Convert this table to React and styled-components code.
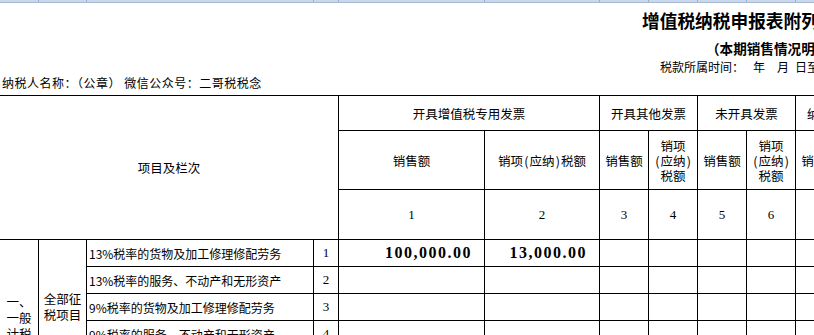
import styled, { createGlobalStyle } from "styled-components";

const GlobalStyle = createGlobalStyle`
  html, body {
    margin: 0;
    padding: 0;
    background: #ffffff;
    overflow: hidden;
  }
  body {
    width: 814px;
    height: 335px;
    font-family: "Noto Sans CJK SC", "Noto Sans", sans-serif;
    color: #000;
  }
`;

const colWidths = [39, 48, 227, 25, 146, 115, 49, 49, 49, 49, 49, 49];

// one stacked header: 销项 / (应纳) / 税额
function TaxStack() {
  return (
    <Head $stack>
      销项
      <br />
      <Paren>(</Paren>应纳<Paren>)</Paren>
      <br />
      税额
    </Head>
  );
}

function EmptyCells({ count }) {
  return Array.from({ length: count }, (_, i) => <Empty key={i} />);
}

export default function App() {
  return (
    <Sheet>
      <GlobalStyle />
      <ColumnBar>
        {colWidths.map((w, i) => (
          <BarCell key={i} style={{ width: w }} />
        ))}
      </ColumnBar>

      <TitleRow>增值税纳税申报表附列资料（一）</TitleRow>
      <SubTitleRow>（本期销售情况明细）</SubTitleRow>
      <PeriodRow>
        税款所属时间：<Gap $w={9} />年<Gap $w={12} />月<Gap $w={6} />日至
      </PeriodRow>
      <PayerRow>纳税人名称：（公章） 微信公众号：二哥税税念</PayerRow>

      <TableWrap>
        <Table>
          <colgroup>
            {colWidths.map((w, i) => (
              <col key={i} style={{ width: w }} />
            ))}
          </colgroup>
          <tbody>
            <tr style={{ height: 35 }}>
              <Head colSpan={4} rowSpan={3}>项目及栏次</Head>
              <Head colSpan={2}>开具增值税专用发票</Head>
              <Head colSpan={2}>开具其他发票</Head>
              <Head colSpan={2}>未开具发票</Head>
              <Head colSpan={2}>纳税检查调整</Head>
            </tr>
            <tr style={{ height: 59 }}>
              <Head>销售额</Head>
              <Head>
                销项<Paren>(</Paren>应纳<Paren>)</Paren>税额
              </Head>
              <Head>销售额</Head>
              <TaxStack />
              <Head>销售额</Head>
              <TaxStack />
              <Head>销售额</Head>
              <TaxStack />
            </tr>
            <tr style={{ height: 50 }}>
              {[1, 2, 3, 4, 5, 6, 7, 8].map((n) => (
                <NumHead key={n}>{n}</NumHead>
              ))}
            </tr>

            <Row>
              <GroupCell rowSpan={7}>
                一、<br />一般<br />计税<br />方法<br />计税
              </GroupCell>
              <GroupCell rowSpan={5}>
                全部征<br />税项目
              </GroupCell>
              <ItemCell>13%税率的货物及加工修理修配劳务</ItemCell>
              <LineNo>1</LineNo>
              <Amount>100,000.00</Amount>
              <Amount>13,000.00</Amount>
              <EmptyCells count={6} />
            </Row>
            <Row>
              <ItemCell>13%税率的服务、不动产和无形资产</ItemCell>
              <LineNo>2</LineNo>
              <EmptyCells count={8} />
            </Row>
            <Row>
              <ItemCell>9%税率的货物及加工修理修配劳务</ItemCell>
              <LineNo>3</LineNo>
              <EmptyCells count={8} />
            </Row>
            <Row>
              <ItemCell>9%税率的服务、不动产和无形资产</ItemCell>
              <LineNo>4</LineNo>
              <EmptyCells count={8} />
            </Row>
            <Row>
              <ItemCell>6%税率</ItemCell>
              <LineNo>5</LineNo>
              <EmptyCells count={8} />
            </Row>
            <Row>
              <GroupCell rowSpan={2}>
                其中：<br />即征即<br />退项目
              </GroupCell>
              <ItemCell>即征即退货物及加工修理修配劳务</ItemCell>
              <LineNo>6</LineNo>
              <EmptyCells count={8} />
            </Row>
            <Row>
              <ItemCell>即征即退服务、不动产和无形资产</ItemCell>
              <LineNo>7</LineNo>
              <EmptyCells count={8} />
            </Row>
          </tbody>
        </Table>
      </TableWrap>
    </Sheet>
  );
}

const Sheet = styled.div`
  width: 814px;
  height: 335px;
  overflow: hidden;
`;

const ColumnBar = styled.div`
  display: flex;
  height: 2px;
  background: #cbd8ec;
  border-bottom: 1px solid #a7b8d2;
`;

const BarCell = styled.div`
  flex: none;
  box-sizing: border-box;
  border-right: 1px solid #9fb0c8;
`;

const TitleRow = styled.div`
  height: 34px;
  line-height: 34px;
  padding-left: 642px;
  font-size: 17.7px;
  font-weight: 700;
  white-space: nowrap;
`;

const SubTitleRow = styled.div`
  height: 23px;
  line-height: 23px;
  padding-left: 706px;
  font-size: 13.6px;
  font-weight: 700;
  white-space: nowrap;
`;

const PeriodRow = styled.div`
  height: 14px;
  line-height: 14px;
  padding-left: 660px;
  font-size: 12px;
  white-space: nowrap;
`;

const Gap = styled.span`
  display: inline-block;
  width: ${(p) => p.$w}px;
`;

const PayerRow = styled.div`
  height: 18px;
  line-height: 18px;
  margin-bottom: 3px;
  padding-left: 2px;
  font-size: 12px;
  letter-spacing: 0.5px;
  white-space: nowrap;
`;

const TableWrap = styled.div`
  margin-left: -1px;
`;

const Table = styled.table`
  border-collapse: collapse;
  table-layout: fixed;
  width: 894px;

  td, th {
    border: 1px solid #000;
    padding: 0;
    overflow: hidden;
  }
`;

const Head = styled.th`
  font-weight: 400;
  font-size: 12.5px;
  line-height: 15px;
  text-align: center;
  vertical-align: middle;
  white-space: nowrap;
`;

const Paren = styled.span`
  display: inline-block;
  width: 6.5px;
  text-align: center;
`;

const NumHead = styled.th`
  font-family: "Liberation Serif", serif;
  font-weight: 400;
  font-size: 13px;
  text-align: center;
  vertical-align: middle;
`;

const Row = styled.tr`
  height: 27px;
`;

const GroupCell = styled.td`
  font-size: 12.5px;
  line-height: 16px;
  text-align: center;
  vertical-align: middle;
  white-space: nowrap;
`;

const ItemCell = styled.td`
  font-size: 12px;
  padding-left: 2px !important;
  white-space: nowrap;
  vertical-align: middle;
`;

const LineNo = styled.td`
  font-family: "Liberation Serif", serif;
  font-size: 13px;
  text-align: center;
  vertical-align: middle;
`;

const Amount = styled.td`
  font-family: "Liberation Serif", serif;
  font-weight: 700;
  font-size: 16px;
  letter-spacing: 1.5px;
  text-align: right;
  padding-right: 12px !important;
  vertical-align: middle;
`;

const Empty = styled.td``;
